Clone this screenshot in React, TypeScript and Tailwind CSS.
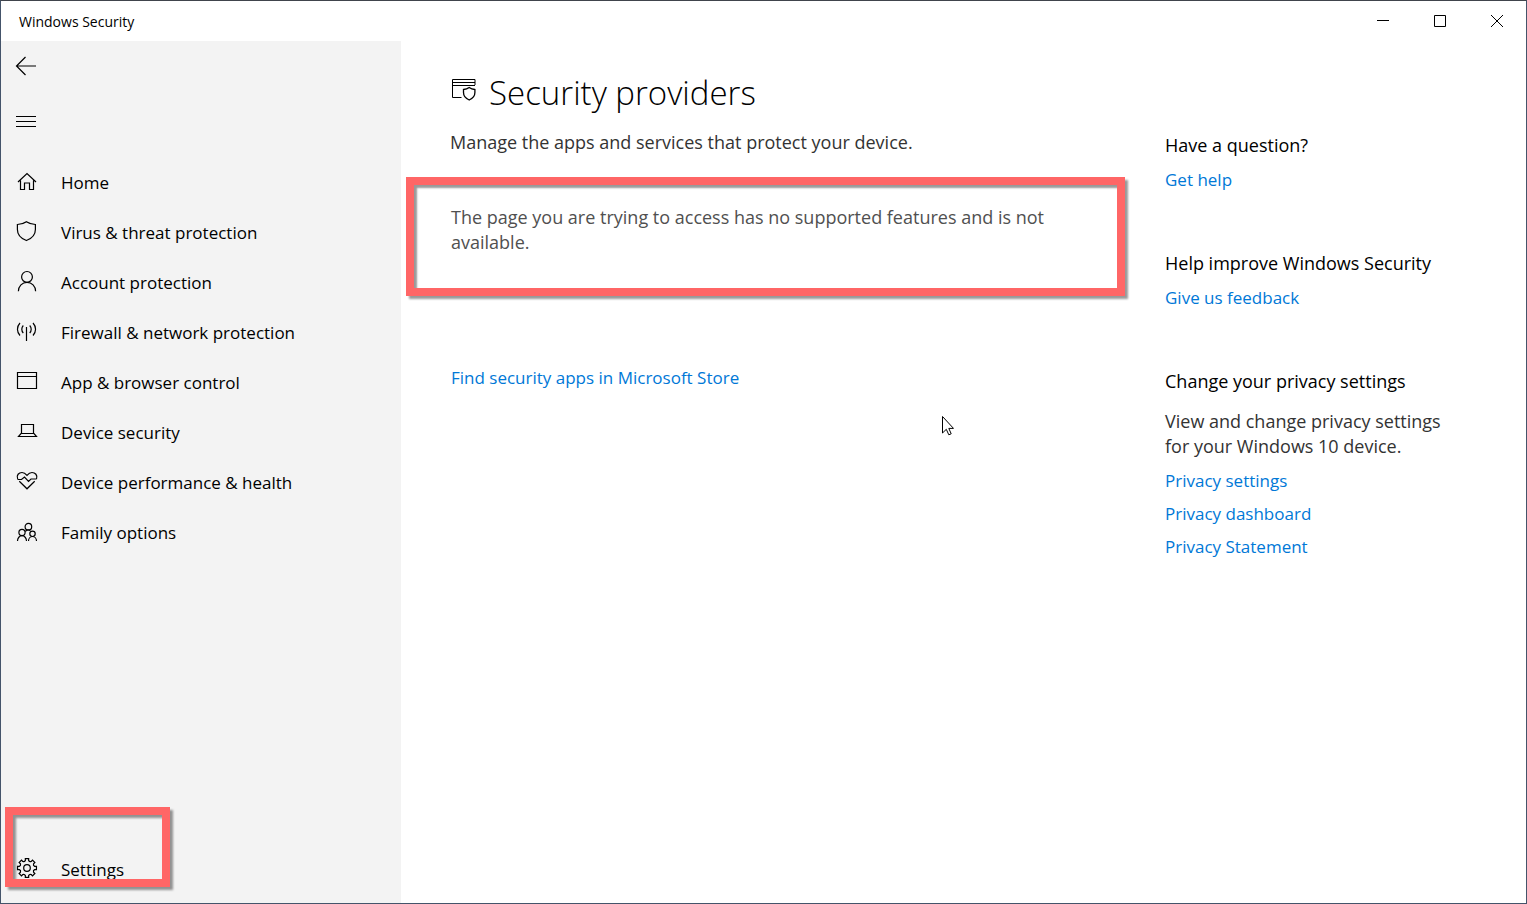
import React from 'react';

interface NavItem {
  label: string;
  icon: React.ReactNode;
}

interface IconProps {
  children: React.ReactNode;
}

const Icon: React.FC<IconProps> = ({ children }) => (
  <svg
    aria-hidden="true"
    className="h-6 w-6 shrink-0 overflow-visible"
    viewBox="0 0 24 24"
    fill="none"
    stroke="currentColor"
    strokeWidth={1.2}
  >
    {children}
  </svg>
);

const navItems: NavItem[] = [
  {
    label: 'Home',
    icon: <path d="M3 11 12 2.5 21 11M5.5 9.5v9h4v-6.5h5v6.5h4v-9" />,
  },
  {
    label: 'Virus & threat protection',
    icon: <path d="M11.4.7C9 2.5 6 3.3 2.4 3.5v5c0 5.5 3.6 9 9 11 5.4-2 9-5.5 9-11v-5C17 3.3 14 2.5 11.4.7Z" />,
  },
  {
    label: 'Account protection',
    icon: (
      <>
        <circle cx="12" cy="5.9" r="5.4" />
        <path d="M3.4 20.3a8.6 9 0 0 1 17.2 0" />
      </>
    ),
  },
  {
    label: 'Firewall & network protection',
    icon: (
      <path d="M11.5 6v14M8.3 4.5c-2 2-2 5.5 0 7.5M5 2c-3.4 3.7-3.4 8.8 0 12.5M14.7 4.5c2 2 2 5.5 0 7.5M18 2c3.4 3.7 3.4 8.8 0 12.5" />
    ),
  },
  {
    label: 'App & browser control',
    icon: <path d="M2.5 1.5h19v16h-19zM2.5 5.5h19" />,
  },
  {
    label: 'Device security',
    icon: <path d="M6.5 12V3.5h12V12M6 12.5h13l2.500 3h-18z" />,
  },
  {
    label: 'Device performance & health',
    icon: (
      <>
        <path d="M2.7 8C1 4 4 1.5 7 1.5c2 0 3.5 1 5 2.8 1.5-1.8 3-2.800 5-2.800 3 0 6 2.500 4.500 6.500M4.300 10.200 12 17.800l7.700-7.600" />
        <path d="M2.500 8.500h4L9.500 6l4 4.500L16 8h5.500" />
      </>
    ),
  },
  {
    label: 'Family options',
    icon: (
      <>
        <circle cx="13.4" cy="5.7" r="3.300" />
        <circle cx="7" cy="11.500" r="3.100" />
        <circle cx="17.500" cy="12.800" r="2.700" />
        <path d="M2.500 20a4.500 5.300 0 0 1 9 0M13.500 20a4 4.500 0 0 1 8 0M10.300 10.500a4 4 0 0 1 5-1" />
      </>
    ),
  },
];

// 齒輪輪廓
const gearPath = Array.from({ length: 8 }, (_, i) => {
  const point = (deg: number, r: number) => {
    const a = ((i * 45 + deg) * Math.PI) / 180;
    return `${(12 + r * Math.cos(a)).toFixed(2)} ${(10 + r * Math.sin(a)).toFixed(2)}`;
  };
  return `${i === 0 ? 'M' : 'L'}${point(-12, 7.8)}L${point(-10, 9.6)}L${point(10, 9.6)}L${point(12, 7.8)}Q${point(22.5, 6.4)} ${point(33, 7.8)}`;
}).join('') + 'Z';

const NavButton: React.FC<NavItem> = ({ label, icon }) => (
  <button className="flex h-[50px] w-full items-center gap-[22px] pl-3.5 text-left">
    <Icon>{icon}</Icon>
    <span className="pb-0.5">{label}</span>
  </button>
);

const TextLink: React.FC<{ children: React.ReactNode }> = ({ children }) => (
  <a href="#" className="text-[17px] text-[#0078d7] hover:text-gray-500">{children}</a>
);

const App: React.FC = () => {
  return (
    <div className="relative flex min-h-screen flex-col border border-[#44546a] border-t-[#40444c] bg-white font-['Open_Sans','Noto_Sans',sans-serif] text-lg leading-[25px] text-black">
      <header className="flex h-10 items-center justify-between pr-px pl-[18px]">
        <span className="pt-0.5 text-sm">Windows Security</span>
        <div className="flex h-full">
          <button aria-label="Minimize" className="flex w-[57px] items-center justify-center">
            <svg className="h-3 w-3" viewBox="0 0 12 12" fill="none" stroke="currentColor">
              <path d="M0 5.5h12" />
            </svg>
          </button>
          <button aria-label="Maximize" className="flex w-[57px] items-center justify-center">
            <svg className="h-3 w-3" viewBox="0 0 12 12" fill="none" stroke="currentColor">
              <path d="M.5.5h11v11H.5z" />
            </svg>
          </button>
          <button aria-label="Close" className="flex w-[57px] items-center justify-center">
            <svg className="h-3 w-3" viewBox="0 0 12 12" fill="none" stroke="currentColor">
              <path d="m0 0 12 12M12 0 0 12" />
            </svg>
          </button>
        </div>
      </header>

      <div className="flex flex-1">
        <nav className="flex w-[400px] shrink-0 flex-col bg-[#f3f3f3] pb-2 text-[17px]">
          <button aria-label="Back" className="flex h-[50px] items-center pl-3.5">
            <Icon><path d="M1.5 12H21M10.500 3l-9 9 9 9" /></Icon>
          </button>
          <button aria-label="Menu" className="mt-1.5 flex h-[50px] items-center pl-3.5">
            <Icon><path d="M1 6.500h20M1 11.500h20M1 16.500h20" strokeWidth={1} /></Icon>
          </button>
          <div className="mt-[11px]">
            {navItems.map((item) => (
              <NavButton key={item.label} {...item} />
            ))}
          </div>
          <div className="relative mt-auto">
            <NavButton
              label="Settings"
              icon={
                <>
                  <path d={gearPath} />
                  <circle cx="12" cy="10" r="3.3" />
                </>
              }
            />
            <div className="pointer-events-none absolute bottom-2 left-1 h-20 w-[165px] border-8 border-[#ff6666] drop-shadow-[3px_3px_1px_rgba(0,0,0,0.4)]" />
          </div>
        </nav>

        <main className="min-w-0 flex-1 pt-[27px]">
          <div className="flex h-12 items-center gap-3 pl-[50px]">
            <svg aria-hidden="true" className="mb-1 h-[26px] w-[26px]" viewBox="0 0 26 26" fill="none" stroke="currentColor" strokeWidth={1.3}>
              <path d="M10.5 20.5h-9v-18h22.500V8M1.500 5.500H24M1.500 8.500H24" strokeWidth={1} />
              <path d="M18.200 10.500c-1.800 1.300-3.500 1.800-5.700 2v3c0 4 2.200 6 5.700 7.500 3.500-1.500 5.700-3.500 5.700-7.500v-3c-2.200-.2-3.900-.7-5.700-2Z" />
            </svg>
            <h1 className="text-[33px] font-light">Security providers</h1>
          </div>
          <p className="mt-3.5 pl-[49px] text-[#333333]">Manage the apps and services that protect your device.</p>
          <div className="mt-[22px] mr-10 ml-[5px] min-h-[119px] border-8 border-[#ff6666] pt-5 pr-7 pl-[37px] shadow-[3px_3px_2px_rgba(0,0,0,0.4),inset_3px_3px_2px_rgba(0,0,0,0.4)]">
            <p className="text-[#505050]">The page you are trying to access has no supported features and is not available.</p>
          </div>
          <p className="mt-[69px] pl-[50px]">
            <TextLink>Find security apps in Microsoft Store</TextLink>
          </p>
        </main>

        <aside className="w-[361px] shrink-0 pt-[92px]">
          <section>
            <h2>Have a question?</h2>
            <p className="mt-[9px]"><TextLink>Get help</TextLink></p>
          </section>
          <section className="mt-[59px]">
            <h2>Help improve Windows Security</h2>
            <p className="mt-[9px]"><TextLink>Give us feedback</TextLink></p>
          </section>
          <section className="mt-[59px]">
            <h2>Change your privacy settings</h2>
            <p className="mt-[15px] w-72 text-[#333333]">View and change privacy settings for your Windows 10 device.</p>
            <ul className="mt-[9px] space-y-2">
              <li><TextLink>Privacy settings</TextLink></li>
              <li><TextLink>Privacy dashboard</TextLink></li>
              <li><TextLink>Privacy Statement</TextLink></li>
            </ul>
          </section>
        </aside>
      </div>

      <svg aria-hidden="true" className="pointer-events-none absolute top-[415px] left-[941px] h-5 w-3" viewBox="0 0 12 20" fill="white" stroke="black" strokeWidth={1}>
        <path d="M.5.5v16.500l3.800-3.700 2.500 5.500 2.400-1-2.400-5.400h4.700z" />
      </svg>
    </div>
  );
};

export default App;
